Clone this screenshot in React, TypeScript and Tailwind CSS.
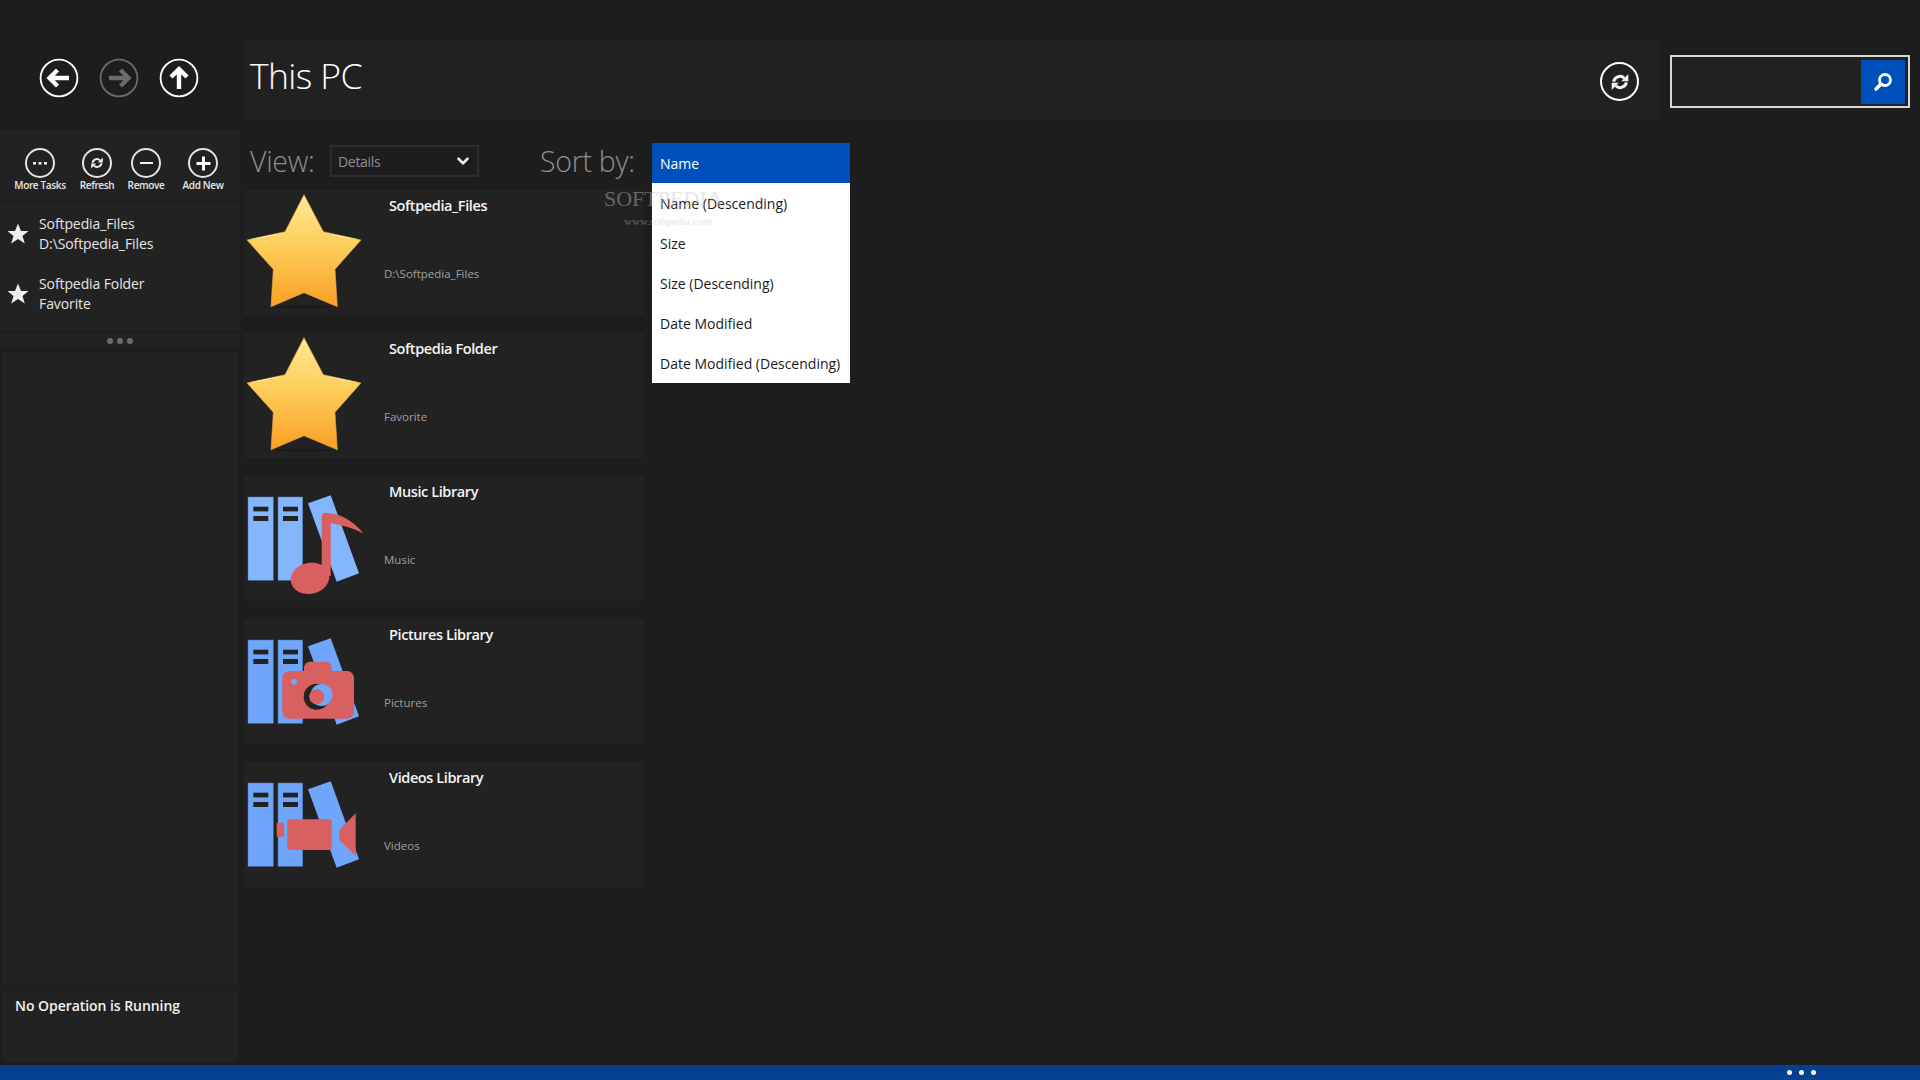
import { ChevronDown } from "lucide-react";

const TOOLS = [
  { label: "More Tasks", glyph: "more", cls: "w-[52px] ml-[14px]" },
  { label: "Refresh", glyph: "sync", cls: "w-[34px] ml-[14px]" },
  { label: "Remove", glyph: "minus", cls: "w-[36px] ml-[14px]" },
  { label: "Add New", glyph: "plus", cls: "w-[42px] ml-[18px]" },
];

const FAVORITES = [
  { name: "Softpedia_Files", sub: "D:\\Softpedia_Files" },
  { name: "Softpedia Folder", sub: "Favorite" },
];

const CARDS = [
  { title: "Softpedia_Files", sub: "D:\\Softpedia_Files", kind: "star" },
  { title: "Softpedia Folder", sub: "Favorite", kind: "star" },
  { title: "Music Library", sub: "Music", kind: "music" },
  { title: "Pictures Library", sub: "Pictures", kind: "camera" },
  { title: "Videos Library", sub: "Videos", kind: "video" },
];

const SORTS = ["Name", "Name (Descending)", "Size", "Size (Descending)", "Date Modified", "Date Modified (Descending)"];

function SyncGlyph({ size }: { size: number }) {
  return (
    <svg width={size} height={size} viewBox="0 0 24 24" fill="#f0f0f0">
      <path d="M4.500 11.500C4.800 6.500 12.500 2.500 17 7.500" fill="none" stroke="#f0f0f0" strokeWidth="3.600" />
      <polygon points="13.500,11 22,11 22,2.500" />
      <path d="M19.500 12.500C19.200 17.500 11.500 21.500 7 16.500" fill="none" stroke="#f0f0f0" strokeWidth="3.600" />
      <polygon points="10.500,13 2,13 2,21.500" />
    </svg>
  );
}

function NavButton({ dir, dim }: { dir: "left" | "right" | "up"; dim?: boolean }) {
  const color = dim ? "#6b6b6b" : "#ffffff";
  const arrow =
    dir === "left"
      ? "M30 20H11M18.5 12 10.5 20l8 8"
      : dir === "right"
        ? "M10 20h19M21.500 12l8 8-8 8"
        : "M20 31V11M12 19l8-8 8 8";
  return (
    <svg width="40" height="40" viewBox="0 0 40 40" fill="none">
      <circle cx="20" cy="20" r="18.4" stroke={color} strokeWidth="1.8" />
      <path d={arrow} stroke={color} strokeWidth="4.4" />
    </svg>
  );
}

function ToolGlyph({ glyph }: { glyph: string }) {
  return (
    <div className="w-[30px] h-[30px] rounded-full border-2 border-[#e4e4e4] flex items-center justify-center shrink-0">
      {glyph === "more" && (
        <svg width="16" height="4" viewBox="0 0 16 4" fill="#f0f0f0">
          <rect x="1" y="1" width="3" height="2.500" />
          <rect x="6.500" y="1" width="3" height="2.500" />
          <rect x="12" y="1" width="3" height="2.500" />
        </svg>
      )}
      {glyph === "sync" && <SyncGlyph size={14} />}
      {glyph === "minus" && <div className="w-[13px] h-[2px] bg-[#f0f0f0]" />}
      {glyph === "plus" && (
        <svg width="15" height="15" viewBox="0 0 15 15" fill="#ffffff">
          <rect x="6" y="0.500" width="3" height="14" />
          <rect x="0.500" y="6" width="14" height="3" />
        </svg>
      )}
    </div>
  );
}

function Books({ fill }: { fill: string }) {
  return (
    <>
      <rect x="4" y="21" width="25.300" height="83.300" fill={fill} stroke="#4f79b8" strokeWidth="0.500" />
      <rect x="34" y="21" width="24.700" height="83.300" fill={fill} stroke="#4f79b8" strokeWidth="0.500" />
      <rect x="9.300" y="30.700" width="15" height="4.700" fill="#222222" />
      <rect x="9.300" y="40" width="15" height="5" fill="#222222" />
      <rect x="39" y="30.700" width="15" height="4.700" fill="#222222" />
      <rect x="39" y="40" width="15" height="5" fill="#222222" />
      <polygon points="64,27.300 86.700,19.300 115,97.300 92.700,105.700" fill={fill} />
    </>
  );
}

function CardIcon({ kind, id }: { kind: string; id: number }) {
  return (
    <svg width="120" height="125" viewBox="0 0 120 125" className="shrink-0">
      {kind === "star" && (
        <>
          <defs>
            <linearGradient id={`gold${id}`} x1="0" y1="0" x2="0" y2="1">
              <stop offset="0" stopColor="#ffea94" />
              <stop offset="0.5" stopColor="#fdcb55" />
              <stop offset="1" stopColor="#fa9f25" />
            </linearGradient>
          </defs>
          <ellipse cx="60" cy="117" rx="30" ry="1.500" fill="#1b1b1b" />
          <polygon
            points="60,4.700 79.300,41.700 117,50 91,79.300 93.300,116.700 60,102.700 27,116.700 29.300,79.300 3,50 41,41.700"
            fill={`url(#gold${id})`}
            stroke="#e9a93a"
            strokeWidth="0.600"
            strokeLinejoin="round"
          />
          <path d="M4 49.500 41 42.500 22 47Z M116 49.500 79 42.500 98 47Z" fill="#fff6d0" />
        </>
      )}
      {kind === "music" && (
        <>
          <Books fill="#84b6fd" />
          <ellipse cx="66" cy="102.300" rx="19.500" ry="15.500" transform="rotate(-12 66 102.300)" fill="#d96060" />
          <path d="M77.700 100V40Q78 36.500 82 36.700 103 37.500 119.300 57.300 103 49.500 86.700 47.300V100Z" fill="#d96060" />
        </>
      )}
      {kind === "camera" && (
        <>
          <Books fill="#6fa5fb" />
          <rect x="60" y="42.700" width="27.700" height="20" rx="6" fill="#d96060" />
          <rect x="38.300" y="52" width="71.700" height="47.700" rx="7" fill="#d96060" />
          <circle cx="50" cy="62.700" r="3" fill="#6fa5fb" />
          <circle cx="72.700" cy="77.700" r="13" fill="#222222" />
          <circle cx="77.500" cy="76" r="11" fill="#6fa5fb" />
          <circle cx="72.700" cy="77.700" r="7.500" fill="#d96060" />
        </>
      )}
      {kind === "video" && (
        <>
          <Books fill="#6fa5fb" />
          <rect x="43.300" y="57.300" width="44.400" height="30.700" rx="3" fill="#d96060" />
          <rect x="32.700" y="60.700" width="7.300" height="14" fill="#d96060" />
          <polygon points="95.300,68 111.700,51.300 111.700,94 95.300,78" fill="#d96060" />
        </>
      )}
    </svg>
  );
}

export default function App() {
  return (
    <div className="w-[1920px] h-[1080px] overflow-hidden flex flex-col bg-[#1d1d1d] text-white font-['Open_Sans',sans-serif] relative">
      <div className="flex-1 flex min-h-0">
        <aside className="w-[240px] shrink-0 flex flex-col">
          <div className="h-[130px] flex items-center gap-[20px] pl-[39px] pt-[26px]">
            <NavButton dir="left" />
            <NavButton dir="right" dim />
            <NavButton dir="up" />
          </div>

          <div className="h-[70px] bg-[#222222] flex pt-[18px]">
            {TOOLS.map((t) => (
              <div key={t.label} className={`${t.cls} flex flex-col items-center`}>
                <ToolGlyph glyph={t.glyph} />
                <span className="text-[10px] leading-[15px] font-semibold tracking-[-0.35px] whitespace-nowrap text-[#e8e8e8]">{t.label}</span>
              </div>
            ))}
          </div>

          <div className="mt-[3px] h-[127px] bg-[#222222] pt-[11px] flex flex-col gap-[4px]">
            {FAVORITES.map((f) => (
              <div key={f.name} className="h-[56px] flex items-start">
                <svg width="22" height="22" viewBox="0 0 22 22" className="ml-[7px] mt-[9px] shrink-0" fill="#eeeeee">
                  <polygon points="11,0.500 14,8 21.500,8 15.500,13 17.800,20.500 11,16 4.200,20.500 6.500,13 0.500,8 8,8" />
                </svg>
                <div className="ml-[10px] text-[14px] leading-[20px] tracking-[-0.1px] text-[#e6e6e6] whitespace-nowrap">
                  <div>{f.name}</div>
                  <div>{f.sub}</div>
                </div>
              </div>
            ))}
          </div>

          <div className="mt-[3px] h-[15px] bg-[#222222] flex items-center justify-center gap-[4px]">
            <span className="w-[6px] h-[6px] rounded-full bg-[#6e6e6e]" />
            <span className="w-[6px] h-[6px] rounded-full bg-[#6e6e6e]" />
            <span className="w-[6px] h-[6px] rounded-full bg-[#6e6e6e]" />
          </div>

          <div className="mt-[4px] mx-[1px] h-[632px] bg-[#222222]" />

          <div className="mt-[7px] mx-[3px] h-[71px] bg-[#222222] pl-[12px] pt-[5px] text-[14px] leading-[20px] font-semibold tracking-[-0.05px] text-[#f2f2f2]">
            No Operation is Running
          </div>
        </aside>

        <main className="flex-1 flex flex-col min-w-0">
          <div className="flex pt-[40px] h-[120px]">
            <div className="ml-[5px] w-[1415px] h-[80px] bg-[#212121] flex justify-between pl-[5px] pr-[21px]">
              <h1 className="text-[35.500px] leading-[70px] font-light tracking-[-0.6px] text-white">This PC</h1>
              <div className="w-[39px] h-[39px] mt-[22px] rounded-full border-2 border-white flex items-center justify-center">
                <SyncGlyph size={20} />
              </div>
            </div>
            <div className="ml-[10px] mt-[15px] w-[240px] h-[53px] border-2 border-[#d8d8d8] bg-[#222222] flex justify-end p-[3px]">
              <div className="w-[44px] h-[44px] bg-[#0050bb] flex items-center justify-center">
                <svg width="20" height="20" viewBox="0 0 20 20" fill="none" stroke="#ffffff">
                  <circle cx="12" cy="8" r="5.500" strokeWidth="2.800" />
                  <path d="M8 12 3 17" strokeWidth="3.600" strokeLinecap="round" />
                </svg>
              </div>
            </div>
          </div>

          <div className="h-[70px] flex items-center pl-[10px] pt-[12px] text-[#8f8f8f]">
            <span className="w-[80px] text-[28.500px] font-light tracking-[-0.3px]">View:</span>
            <div className="w-[149px] h-[32px] border-2 border-[#2e2e2e] flex items-center justify-between pl-[6px] pr-[5px] text-[14px] tracking-[-0.3px]">
              <span>Details</span>
              <ChevronDown size={18} strokeWidth={3.500} color="#e8e8e8" />
            </div>
            <span className="ml-[61px] text-[28.500px] font-light tracking-[-0.3px]">Sort by:</span>
          </div>

          <div className="ml-[4px] flex flex-col gap-[18px]">
            {CARDS.map((c, i) => (
              <div key={c.title} className="w-[400px] h-[125px] bg-[#222222] flex">
                <CardIcon kind={c.kind} id={i} />
                <div className="pl-[20px] pt-[6px] flex flex-col whitespace-nowrap">
                  <span className="ml-[5px] text-[14.500px] leading-[20px] font-semibold tracking-[-0.4px] text-[#f5f5f5]">{c.title}</span>
                  <span className="mt-[48px] text-[11.500px] leading-[20px] tracking-[0px] text-[#a0a0a0]">{c.sub}</span>
                </div>
              </div>
            ))}
          </div>
        </main>
      </div>

      <div className="h-[15px] shrink-0 bg-[#03408f] flex items-center justify-end gap-[7px] pr-[104px]">
        <span className="w-[5px] h-[5px] rounded-full bg-white" />
        <span className="w-[5px] h-[5px] rounded-full bg-white" />
        <span className="w-[5px] h-[5px] rounded-full bg-white" />
      </div>

      <div className="absolute left-[652px] top-[143px] w-[198px] bg-white text-[14px] text-[#1a1a1a]">
        {SORTS.map((s, i) => (
          <div key={s} className={`h-[40px] flex items-center pl-[8px] whitespace-nowrap ${i === 0 ? "bg-[#0050bb] text-white" : ""}`}>
            {s}
          </div>
        ))}
      </div>

      <div className="absolute left-[604px] top-[186px] font-['Liberation_Serif',serif] text-[#ffffff55] [text-shadow:0_0_1px_rgba(0,0,0,0.15)] pointer-events-none">
        <div className="text-[22px] leading-[26px] whitespace-nowrap">SOFTPEDIA</div>
        <div className="ml-[20px] mt-[3px] text-[11px] leading-[12px] whitespace-nowrap">www.softpedia.com</div>
      </div>
    </div>
  );
}
